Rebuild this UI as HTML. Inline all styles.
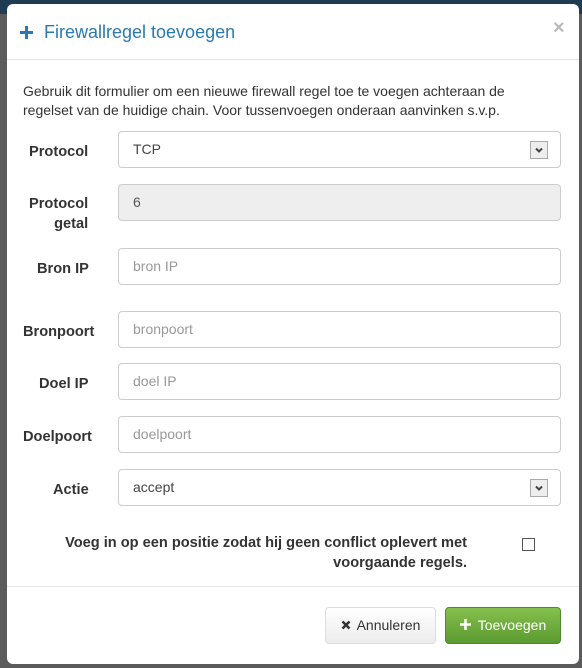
<!DOCTYPE html>
<html><head><meta charset="utf-8"><style>
*{box-sizing:border-box;margin:0;padding:0}
body{width:582px;height:668px;background:#5b5b5b;font-family:"Liberation Sans",sans-serif;font-size:14px;color:#333;position:relative;overflow:hidden}
.top{position:absolute;left:0;top:0;width:582px;height:14px;background:#1f3d52}
.modal{position:absolute;left:7px;top:4px;width:572px;height:660px;background:#fff;border-radius:6px}
.a{position:absolute}
.title{left:37px;top:18px;font-size:18px;color:#2a7ab0}
.x{left:546px;top:13px;font-size:20px;font-weight:bold;color:#bbb}
.hr{left:0;width:572px;height:1px;background:#e5e5e5}
.lbl{font-weight:bold;color:#333;text-align:right;line-height:20px;font-size:14.6px;margin-top:2px}
.in{left:111px;width:443px;height:37px;border:1px solid #ccc;border-radius:4px;padding:0 0 0 14px;line-height:35px;color:#999;}
.in.v{color:#444}
.in.dis{background:#eee;color:#555}
.arr{position:absolute;right:12px;top:9px;width:18px;height:18px;border:1px solid #aaa;background:#eee}
.arr svg{display:block}
.btn{top:603px;height:37px;border-radius:4px;line-height:35px;text-align:center;font-size:14px}
</style></head><body>
<div class="top"></div>
<div class="modal">
<svg class="a" style="left:13px;top:22px" width="13" height="13" viewBox="0 0 13 13"><path d="M5 0h3v5h5v3H8v5H5V8H0V5h5z" fill="#2a7ab0"/></svg>
<div class="a title">Firewallregel toevoegen</div>
<div class="a x">×</div>
<div class="a hr" style="top:55px"></div>
<div class="a" style="left:16px;top:78px;line-height:19px;color:#333;width:500px">Gebruik dit formulier om een nieuwe firewall regel toe te voegen achteraan de regelset van de huidige chain. Voor tussenvoegen onderaan aanvinken s.v.p.</div>

<div class="a lbl" style="left:22px;top:136px">Protocol</div>
<div class="a in v" style="top:127px">TCP<div class="arr"><svg width="16" height="16" viewBox="0 0 16 16"><path d="M5 6.5l3 3 3-3" stroke="#444" stroke-width="2" fill="none"/></svg></div></div>

<div class="a lbl" style="left:22px;top:188px">Protocol<br>getal</div>
<div class="a in dis" style="top:180px">6</div>

<div class="a lbl" style="left:30px;top:253px">Bron IP</div>
<div class="a in" style="top:244px">bron IP</div>

<div class="a lbl" style="left:16px;top:316px">Bronpoort</div>
<div class="a in" style="top:307px">bronpoort</div>

<div class="a lbl" style="left:32px;top:368px">Doel IP</div>
<div class="a in" style="top:359px">doel IP</div>

<div class="a lbl" style="left:16px;top:421px">Doelpoort</div>
<div class="a in" style="top:412px">doelpoort</div>

<div class="a lbl" style="left:46px;top:474px">Actie</div>
<div class="a in v" style="top:465px">accept<div class="arr"><svg width="16" height="16" viewBox="0 0 16 16"><path d="M5 6.5l3 3 3-3" stroke="#444" stroke-width="2" fill="none"/></svg></div></div>

<div class="a lbl" style="left:20px;top:527px;width:440px">Voeg in op een positie zodat hij geen conflict oplevert met<br>voorgaande regels.</div>
<div class="a" style="left:515px;top:534px;width:13px;height:13px;border:1px solid #555;background:#fff"></div>

<div class="a hr" style="top:582px"></div>
<div class="a btn" style="left:318px;width:111px;border:1px solid #ddd;background:linear-gradient(#fff,#ececec);color:#333"><svg width="10" height="10" viewBox="0 0 10 10" style="margin-right:6px"><path d="M1.5 1.5l7 7M8.5 1.5l-7 7" stroke="#333" stroke-width="2.6"/></svg>Annuleren</div>
<div class="a btn" style="left:438px;width:116px;border:1px solid #4f8a2a;background:linear-gradient(#86c04e,#5b9a2f);color:#fff"><svg width="11" height="11" viewBox="0 0 13 13" style="margin-right:7px"><path d="M5 0h3v5h5v3H8v5H5V8H0V5h5z" fill="#fff"/></svg>Toevoegen</div>
</div>
</body></html>
